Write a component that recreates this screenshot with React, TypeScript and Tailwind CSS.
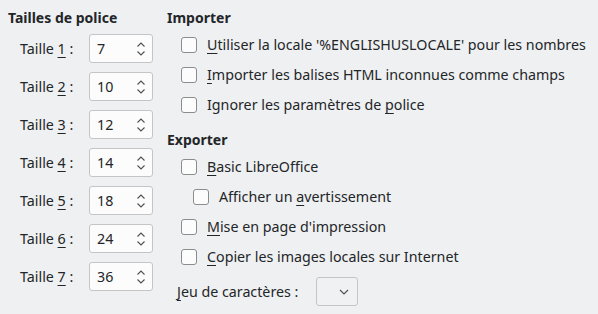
import React from "react";

const sizes = [
  { n: "1", v: "7" },
  { n: "2", v: "10" },
  { n: "3", v: "12" },
  { n: "4", v: "14" },
  { n: "5", v: "18" },
  { n: "6", v: "24" },
  { n: "7", v: "36" },
];

const Check: React.FC<{ label: React.ReactNode; indent?: boolean }> = ({ label, indent }) => (
  <div className={`flex items-center h-[30px] ${indent ? "pl-[26px]" : "pl-[14px]"}`}>
    <span className="w-[16px] h-[16px] rounded-[3px] border border-[#8a8c8e] bg-[#fcfcfc] shrink-0" />
    <span className="ml-[10px] whitespace-nowrap">{label}</span>
  </div>
);

const U: React.FC<{ children: React.ReactNode }> = ({ children }) => (
  <span className="underline underline-offset-[3px] decoration-[1px]">{children}</span>
);

const Spin: React.FC<{ value: string }> = ({ value }) => (
  <div className="w-[64px] h-[29px] rounded-[3px] border border-[#c3c5c7] bg-[#fcfcfc] flex items-center pl-[7px] pr-[6px]">
    <span className="flex-1">{value}</span>
    <svg width="10" height="18" viewBox="0 0 10 18" fill="none" stroke="#4d4f51" strokeWidth="1.1">
      <path d="M1.5 6.5 L5 3 L8.5 6.5" />
      <path d="M1.5 11.5 L5 15 L8.5 11.5" />
    </svg>
  </div>
);

const App: React.FC = () => {
  return (
    <div
      className="w-[598px] h-[314px] bg-[#eff0f1] text-[#232629] text-[14.25px] flex"
      style={{ fontFamily: '"Noto Sans", sans-serif' }}
    >
      {/* Tailles de police */}
      <div className="w-[159px] pl-[8px] pt-[8px]">
        <div className="font-bold h-[20px] leading-[20px] text-[14px]">Tailles de police</div>
        <div className="flex flex-col gap-[9px] mt-[6px]">
          {sizes.map((s) => (
            <div key={s.n} className="flex items-center">
              <span className="w-[81px] pl-[12px] whitespace-nowrap">
                Taille <U>{s.n}</U> :
              </span>
              <Spin value={s.v} />
            </div>
          ))}
        </div>
      </div>

      {/* Importer / Exporter */}
      <div className="flex-1 pl-[8px] pt-[8px]">
        <div className="font-bold h-[20px] leading-[20px] text-[14px]">Importer</div>
        <div className="mt-[2px]">
          <Check label={<><U>U</U>tiliser la locale '%ENGLISHUSLOCALE' pour les nombres</>} />
          <Check label={<><U>I</U>mporter les balises HTML inconnues comme champs</>} />
          <Check label={<>Ignorer les paramètres de <U>p</U>olice</>} />
        </div>
        <div className="font-bold h-[20px] leading-[20px] text-[14px] mt-[10px]">Exporter</div>
        <div className="mt-[2px]">
          <Check label={<><U>B</U>asic LibreOffice</>} />
          <Check indent label={<>Afficher un <U>a</U>vertissement</>} />
          <Check label={<><U>M</U>ise en page d'impression</>} />
          <Check label={<><U>C</U>opier les images locales sur Internet</>} />
        </div>
        <div className="flex items-center pl-[10px] mt-[5px]">
          <span className="whitespace-nowrap">
            <U>J</U>eu de caractères :
          </span>
          <div className="ml-[18px] w-[42px] h-[29px] rounded-[3px] border border-[#c3c5c7] bg-[#f0f1f2] flex items-center justify-end pr-[8px]">
            <svg width="10" height="6" viewBox="0 0 10 6" fill="none" stroke="#4d4f51" strokeWidth="1.1">
              <path d="M1 1 L5 5 L9 1" />
            </svg>
          </div>
        </div>
      </div>
    </div>
  );
};

export default App;
